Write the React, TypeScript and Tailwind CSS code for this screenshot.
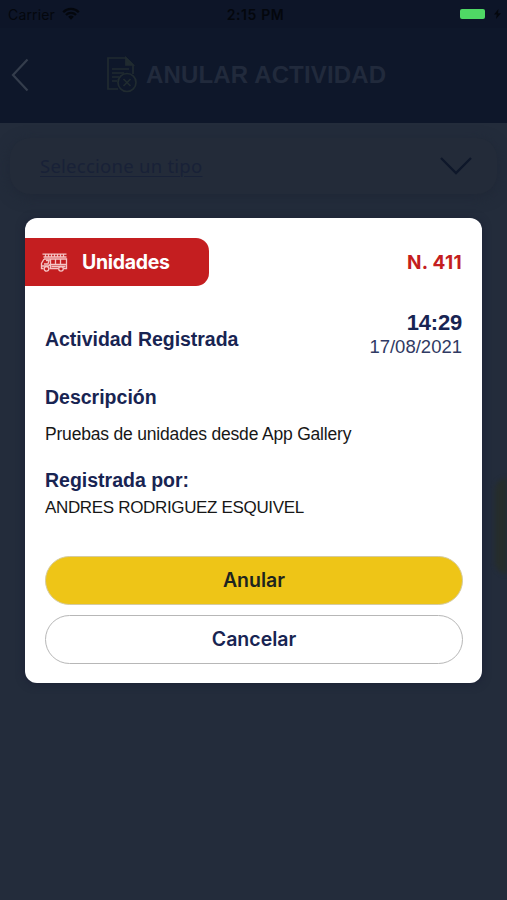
interface Activity {
  unit: string;
  number: string;
  time: string;
  date: string;
  description: string;
  author: string;
}

const activity: Activity = {
  unit: "Unidades",
  number: "N. 411",
  time: "14:29",
  date: "17/08/2021",
  description: "Pruebas de unidades desde App Gallery",
  author: "ANDRES RODRIGUEZ ESQUIVEL",
};

const App = () => {
  return (
    <div className="relative h-[900px] w-[507px] overflow-hidden bg-[#232c3b] font-['Liberation_Sans',Arial,sans-serif]">
      <Header />
      <TypeSelect />

      {/* Dimmed list button peeking out behind the modal */}
      <div className="absolute top-[478px] right-0 h-[96px] w-[12px] rounded-l-full bg-[#262d2c] blur-[2px]" />

      <div className="absolute inset-0 flex items-start justify-center pt-[218px]">
        <ActivityModal {...activity} />
      </div>
    </div>
  );
};

const Header = () => (
  <header className="h-[123px] bg-[#0e172a]">
    {/* Status bar */}
    <div className="grid h-7 grid-cols-3 items-center bg-[#0d1528] pr-[6px] pl-[8px] font-['Inter',sans-serif] text-[#04070d]">
      <div className="flex items-center gap-[7px]">
        <span className="text-[14px] tracking-[0.15px]">Carrier</span>
        <WifiIcon />
      </div>
      <span className="pl-[2px] text-center text-[14px] font-semibold tracking-[0.6px]">2:15 PM</span>
      <div className="flex items-center justify-end gap-[9px]">
        <div className="-mt-px h-[10px] w-[25px] rounded-[2px] bg-[#4fd865]" />
        <svg width="7" height="10" viewBox="0 0 7 10" fill="currentColor">
          <path d="M4.5 0 0 5.6h2.8L2 10l5-5.8H4z" />
        </svg>
      </div>
    </div>

    {/* Title */}
    <div className="flex h-[93px] items-center">
      <svg className="ml-[11px] shrink-0" width="18" height="34" viewBox="0 0 18 34" fill="none" stroke="#343d4c" strokeWidth="2.2">
        <path d="M16.500 1.500 2 17l14.500 15.500" />
      </svg>
      <DocumentIcon />
      <h1 className="ml-[8px] text-[24px] leading-none font-bold tracking-[0.15px] whitespace-nowrap text-[#212a3c]">
        ANULAR ACTIVIDAD
      </h1>
    </div>
  </header>
);

const WifiIcon = () => (
  <svg className="-mt-[2px]" width="18" height="13" viewBox="0 0 18 13" fill="none" stroke="currentColor" strokeWidth="2.3">
    <path d="M1.200 5.200a11 11 0 0 1 15.600 0M4 8a7 7 0 0 1 10 0" />
    <path d="M6.200 9.800a4 4 0 0 1 5.600 0L9 12.700z" fill="currentColor" stroke="none" />
  </svg>
);

const DocumentIcon = () => (
  <svg className="ml-[77px] shrink-0" width="32" height="38" viewBox="0 0 32 38" fill="none" stroke="#202b30" strokeWidth="1.700">
    <path d="M12 33H2V2h18l7 7v9" />
    <path d="M20 2v7h7z" fill="#202b30" />
    <path d="M6 13h17M6 17h12M6 21h7M6 25h5" />
    <circle cx="21" cy="26.500" r="9" />
    <path d="m17.500 23 7 7m0-7-7 7" />
  </svg>
);

const TypeSelect = () => (
  <div className="mx-[10px] mt-[15px] flex h-[56px] items-center justify-between rounded-[20px] bg-[#232b39] pr-[25px] pl-[30px] shadow-[0_3px_14px_#1f2736]">
    <span className="-mt-px font-['Noto_Sans',sans-serif] text-[18.5px] tracking-[0.25px] text-[#182137] underline decoration-1 underline-offset-[3px]">
      Seleccione un tipo
    </span>
    <svg width="32" height="18" viewBox="0 0 32 18" fill="none" stroke="#0e172a" strokeWidth="2.300">
      <path d="m1 1 15 15L31 1" />
    </svg>
  </div>
);

const ActivityModal = ({ unit, number, time, date, description, author }: Activity) => (
  <section className="h-[465px] w-[457px] rounded-[12px] bg-white pt-5 text-[#182452] shadow-[0_1px_8px_#1b2035]">
    <div className="flex h-[48px] items-center justify-between pr-5">
      <div className="flex h-full w-[184px] items-center gap-[14px] rounded-r-[13px] bg-[#c41e20] pl-[15px]">
        <TruckIcon />
        <span className="mt-[2px] font-['Inter',sans-serif] text-[19.5px] font-bold tracking-[-0.3px] text-white">{unit}</span>
      </div>
      <span className="mt-[2px] font-['Inter',sans-serif] text-[19px] font-bold tracking-[0.3px] text-[#c41e20]">{number}</span>
    </div>

    <div className="px-5">
      <div className="mt-6 flex h-[50px] items-start justify-between">
        <h2 className="mt-[17px] text-[19.5px] leading-6 font-bold tracking-[-0.03px]">Actividad Registrada</h2>
        <div className="text-right">
          <p className="text-[22px] leading-[26px] font-bold tracking-[-0.2px]">{time}</p>
          <p className="text-[18.5px] leading-[22px] text-[#303a63]">{date}</p>
        </div>
      </div>

      <h3 className="mt-[25px] text-[19.5px] leading-6 font-bold">Descripción</h3>
      <p className="mt-[13px] text-[17.5px] leading-6 tracking-[-0.19px] text-[#171717]">{description}</p>

      <h3 className="mt-[22px] text-[19.5px] leading-6 font-bold">Registrada por:</h3>
      <p className="mt-[4px] text-[17px] leading-6 tracking-[-0.34px] text-[#171717]">{author}</p>

      <div className="mt-[36px] flex flex-col gap-[10px] font-['Inter',sans-serif]">
        <button className="h-[49px] w-[418px] rounded-full border border-[#d5cba0] bg-[#eec517] text-[19.5px] font-semibold text-[#1d241f]">
          Anular
        </button>
        <button className="h-[49px] w-[418px] rounded-full border border-[#b7b7b7] bg-white text-[19.5px] font-semibold">
          Cancelar
        </button>
      </div>
    </div>
  </section>
);

// Small fire truck with a ladder on the roof
const TruckIcon = () => (
  <svg width="28" height="19" viewBox="0 0 27 19" fill="none" stroke="#f5c4c4" strokeWidth="1.300">
    <path d="M2 1.200h24M3 4h23M5 1v3M8 1v3M11 1v3M14 1v3M17 1v3M20 1v3M23 1v3" />
    <path d="M3.500 6h22.500V15.500h-3M17.500 15.500H9M3.500 6 1 10.500v5h2" />
    <path d="M5.500 7.500h3L7.500 11H3.500M10 6v9.500M15 6v5.500M20 6v5.500M10 11.500h16M1 13h7l2-2M11 13.500h14" />
    <circle cx="6" cy="15.800" r="2.300" />
    <circle cx="20.500" cy="15.800" r="2.300" />
  </svg>
);

export default App;
